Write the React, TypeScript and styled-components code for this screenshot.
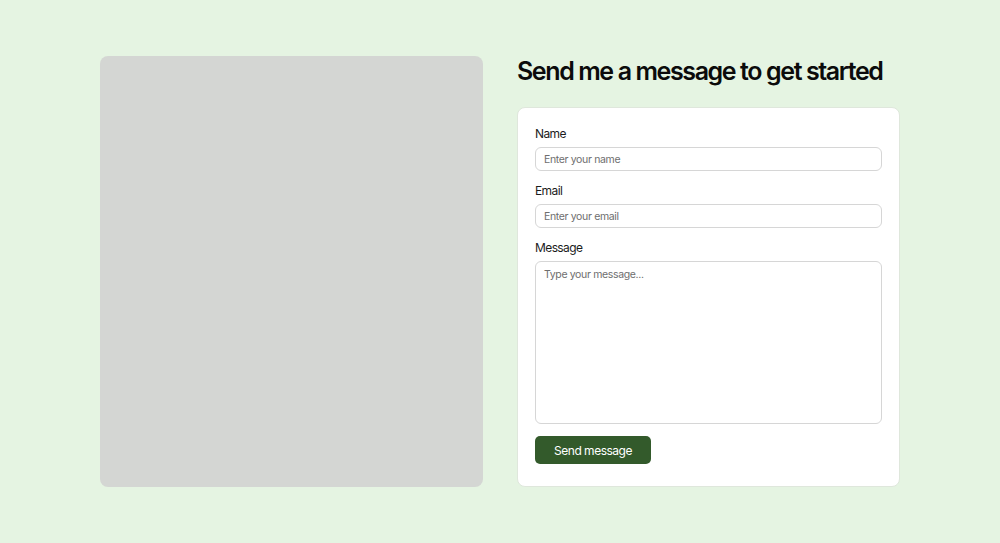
import React from "react";
import styled, { createGlobalStyle } from "styled-components";

const Global = createGlobalStyle`
  html, body { margin: 0; padding: 0; }
  body {
    background: #e5f4e2;
    font-family: Inter, "Noto Sans", sans-serif;
    color: #111;
  }
  * { box-sizing: border-box; }
`;

const Page = styled.div`
  min-height: 543px;
  display: flex;
  align-items: center;
  justify-content: center;
`;

const Layout = styled.div`
  width: 800px;
  display: grid;
  grid-template-columns: 383px 383px;
  gap: 34px;
`;

const ImagePanel = styled.div`
  background: #d4d6d3;
  border-radius: 8px;
  height: 431px;
`;

const Column = styled.div`
  display: flex;
  flex-direction: column;
`;

const Heading = styled.h1`
  margin: 0 0 21px;
  font-size: 25px;
  line-height: 30px;
  font-weight: 600;
  letter-spacing: -1.4px;
  white-space: nowrap;
  color: #0b0b0b;
`;

const Card = styled.form`
  background: #fff;
  border: 1px solid #dfe7dc;
  border-radius: 8px;
  padding: 17px 17px 22px;
  display: flex;
  flex-direction: column;
`;

const Label = styled.label`
  font-size: 12px;
  line-height: 17px;
  letter-spacing: -0.6px;
  color: #1c1c1c;
  margin-bottom: 5px;
`;

const Input = styled.input`
  height: 24px;
  border: 1px solid #d6d6d6;
  border-radius: 6px;
  padding: 0 8px;
  font-family: inherit;
  font-size: 10.5px;
  letter-spacing: -0.35px;
  color: #222;
  margin-bottom: 11px;
  outline: none;
  &::placeholder { color: #6e6e6e; }
`;

const TextArea = styled.textarea`
  height: 163px;
  border: 1px solid #d6d6d6;
  border-radius: 6px;
  padding: 6px 8px;
  font-family: inherit;
  font-size: 10.5px;
  letter-spacing: -0.35px;
  resize: none;
  margin-bottom: 12px;
  outline: none;
  &::placeholder { color: #6e6e6e; }
`;

const Button = styled.button`
  align-self: flex-start;
  width: 116px;
  height: 28px;
  border: none;
  border-radius: 5px;
  background: #335a2b;
  color: #fff;
  font-family: inherit;
  font-size: 12px;
  letter-spacing: -0.5px;
  cursor: pointer;
`;

export default function App() {
  return (
    <>
      <Global />
      <Page>
        <Layout>
          <ImagePanel />
          <Column>
            <Heading>Send me a message to get started</Heading>
            <Card onSubmit={(e) => e.preventDefault()}>
              <Label htmlFor="name">Name</Label>
              <Input id="name" placeholder="Enter your name" />
              <Label htmlFor="email">Email</Label>
              <Input id="email" placeholder="Enter your email" />
              <Label htmlFor="message">Message</Label>
              <TextArea id="message" placeholder="Type your message..." />
              <Button type="submit">Send message</Button>
            </Card>
          </Column>
        </Layout>
      </Page>
    </>
  );
}
